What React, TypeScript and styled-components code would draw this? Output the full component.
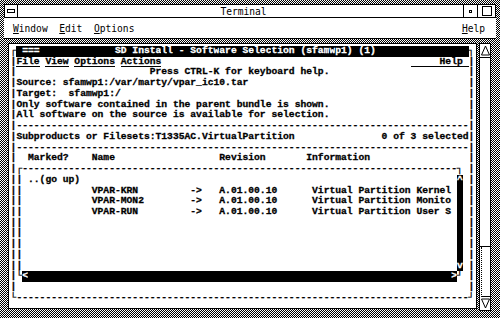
import styled, { createGlobalStyle } from "styled-components";

const GlobalStyle = createGlobalStyle`
  html, body {
    margin: 0;
    padding: 0;
    background: #fff;
  }
  body {
    width: 500px;
    height: 318px;
    overflow: hidden;
  }
`;

const stipple = "repeating-conic-gradient(#000 0% 25%, #fff 0% 50%) 0 0 / 2px 2px";

const COLS = 80;
const CELL_W = 5.8;
const CELL_H = 10.74;

const Screen = styled.div`
  width: 500px;
  height: 318px;
  box-sizing: border-box;
  padding: 4px;
  display: flex;
  flex-direction: column;
  background: ${stipple};
`;

const TitleBar = styled.div`
  display: flex;
  height: 14px;
  box-sizing: border-box;
  border: 1px solid #000;
  background: #fff;
`;

const TitleButton = styled.div<{ $w: number }>`
  flex: none;
  width: ${p => p.$w}px;
  display: flex;
  align-items: center;
  justify-content: center;
  border-right: 1px solid #000;
  box-sizing: border-box;
  &:last-child {
    border-right: none;
  }
`;

const TitleText = styled.div`
  flex: 1;
  display: flex;
  align-items: center;
  justify-content: center;
  padding-left: 6px;
  border-right: 1px solid #000;
  font: 9.6px "DejaVu Sans Mono", monospace;
  color: #000;
`;

const MenuBar = styled.div`
  display: flex;
  align-items: center;
  height: 21px;
  box-sizing: border-box;
  padding: 0 11px 0 9px;
  gap: 11.6px;
  background: #fff;
  border-bottom: 1px solid #000;
  font: 9.6px "DejaVu Sans Mono", monospace;
  color: #000;
  white-space: pre;
`;

const MenuItem = styled.span<{ $right?: boolean }>`
  margin-left: ${p => (p.$right ? "auto" : "0")};
  u {
    text-decoration: underline;
    text-underline-offset: 1px;
  }
`;

const Body = styled.div`
  flex: 1;
  display: flex;
  gap: 2px;
  padding: 4px 5px 0 4px;
`;

const TermFrame = styled.div`
  width: 469px;
  height: 266px;
  box-sizing: border-box;
  border: 1px solid #000;
  background: #fff;
  padding: 2px 0 0 1.6px;
`;

const Row = styled.div`
  display: flex;
  height: ${CELL_H}px;
`;

const Cell = styled.span<{ $inv: boolean; $ul: boolean }>`
  flex: none;
  width: ${CELL_W}px;
  height: ${CELL_H}px;
  font: bold 9.67px/${CELL_H}px "Liberation Mono", "DejaVu Sans Mono", monospace;
  -webkit-text-stroke: 0.3px ${p => (p.$inv ? "#fff" : "#000")};
  white-space: pre;
  overflow: visible;
  color: ${p => (p.$inv ? "#fff" : "#000")};
  background: ${p => (p.$inv ? "#000" : "transparent")};
  box-shadow: ${p => (p.$ul ? "inset 0 -1px 0 #000" : "none")};
`;

const VScroll = styled.div`
  width: 12px;
  height: 268px;
  display: flex;
  flex-direction: column;
  box-sizing: border-box;
  border: 1px solid #000;
  background: #fff;
`;

const Arrow = styled.div`
  flex: none;
  height: 13px;
  display: flex;
  align-items: center;
  justify-content: center;
`;

const Slider = styled.div`
  flex: none;
  height: 190px;
  box-sizing: border-box;
  border-top: 1px solid #000;
  border-bottom: 1px solid #000;
  background: #fff;
`;

const Trough = styled.div`
  flex: 1;
  border-left: 1px dotted #000;
  margin-left: 1px;
  border-bottom: 1px solid #000;
`;

type Seg = { col: number; text: string; inv?: boolean; ul?: boolean };
type CellData = { ch: string; inv: boolean; ul: boolean };

function build(segs: Seg[]): CellData[] {
  const cells: CellData[] = Array.from({ length: COLS }, () => ({ ch: " ", inv: false, ul: false }));
  segs.forEach(s => {
    Array.from(s.text).forEach((ch, i) => {
      const c = cells[s.col + i];
      if (!c) return;
      c.ch = ch;
      if (s.inv) c.inv = true;
      if (s.ul) c.ul = true;
    });
  });
  return cells;
}

const dash = (n: number) => "-".repeat(n);
const sides: Seg[] = [
  { col: 0, text: "|" },
  { col: 79, text: "|" },
];
const box = (...segs: Seg[]): Seg[] => [...sides, { col: 1, text: "|" }, ...segs];

const rows: Seg[][] = [
  [
    { col: 0, text: "┌" },
    { col: 1, text: " ".repeat(78), inv: true },
    { col: 2, text: "===", inv: true },
    { col: 18, text: "SD Install - Software Selection (sfamwp1) (1)", inv: true },
    { col: 79, text: "┐" },
  ],
  [
    ...sides,
    { col: 1, text: "File", ul: true },
    { col: 6, text: "View", ul: true },
    { col: 11, text: "Options", ul: true },
    { col: 19, text: "Actions", ul: true },
    { col: 69, text: "     Help ", ul: true },
  ],
  [...sides, { col: 24, text: "Press CTRL-K for keyboard help." }],
  [...sides, { col: 1, text: "Source: sfamwp1:/var/marty/vpar_ic10.tar" }],
  [...sides, { col: 1, text: "Target:  sfamwp1:/" }],
  [...sides, { col: 1, text: "Only software contained in the parent bundle is shown." }],
  [...sides, { col: 1, text: "All software on the source is available for selection." }],
  [...sides, { col: 1, text: dash(78) }],
  [
    ...sides,
    { col: 1, text: "Subproducts or Filesets:T1335AC.VirtualPartition" },
    { col: 64, text: "0 of 3 selected" },
  ],
  [...sides, { col: 1, text: dash(78) }],
  [
    ...sides,
    { col: 3, text: "Marked?" },
    { col: 14, text: "Name" },
    { col: 36, text: "Revision" },
    { col: 51, text: "Information" },
  ],
  [...sides, { col: 1, text: "┌" + dash(75) + "┐" }],
  box({ col: 3, text: "..(go up)" }, { col: 77, text: "^", inv: true }),
  box(
    { col: 14, text: "VPAR-KRN" },
    { col: 31, text: "->" },
    { col: 36, text: "A.01.00.10" },
    { col: 52, text: "Virtual Partition Kernel" },
    { col: 77, text: " ", inv: true }
  ),
  box(
    { col: 14, text: "VPAR-MON2" },
    { col: 31, text: "->" },
    { col: 36, text: "A.01.00.10" },
    { col: 52, text: "Virtual Partition Monito" },
    { col: 77, text: " ", inv: true }
  ),
  box(
    { col: 14, text: "VPAR-RUN" },
    { col: 31, text: "->" },
    { col: 36, text: "A.01.00.10" },
    { col: 52, text: "Virtual Partition User S" },
    { col: 77, text: " ", inv: true }
  ),
  box({ col: 77, text: " ", inv: true }),
  box({ col: 77, text: " ", inv: true }),
  box({ col: 77, text: " ", inv: true }),
  box({ col: 77, text: " ", inv: true }),
  box({ col: 77, text: "v", inv: true }),
  [
    ...sides,
    { col: 1, text: "└" },
    { col: 2, text: "<" + " ".repeat(73) + ">", inv: true },
    { col: 77, text: "┘" },
  ],
  [...sides],
  [{ col: 0, text: "└" + dash(78) + "┘" }],
];

function Terminal() {
  return (
    <TermFrame>
      {rows.map((segs, r) => (
        <Row key={`row_${r}`}>
          {build(segs).map((c, i) => (
            <Cell key={i} $inv={c.inv} $ul={c.ul}>
              {c.ch}
            </Cell>
          ))}
        </Row>
      ))}
    </TermFrame>
  );
}

function App() {
  return (
    <>
      <GlobalStyle />
      <Screen>
        <TitleBar>
          <TitleButton $w={13}>
            <svg width="8" height="4" viewBox="0 0 8 4">
              <rect x="0.5" y="0.5" width="7" height="3" fill="#fff" stroke="#000" />
            </svg>
          </TitleButton>
          <TitleText>Terminal</TitleText>
          <TitleButton $w={14}>
            <svg width="3" height="3" viewBox="0 0 3 3">
              <rect x="0.5" y="0.5" width="2" height="2" fill="#fff" stroke="#000" />
            </svg>
          </TitleButton>
          <TitleButton $w={17}>
            <svg width="10" height="10" viewBox="0 0 10 10">
              <rect x="0.5" y="0.5" width="9" height="9" fill="#fff" stroke="#000" />
            </svg>
          </TitleButton>
        </TitleBar>
        <MenuBar>
          <MenuItem>
            <u>W</u>indow
          </MenuItem>
          <MenuItem>
            <u>E</u>dit
          </MenuItem>
          <MenuItem>
            <u>O</u>ptions
          </MenuItem>
          <MenuItem $right>
            <u>H</u>elp
          </MenuItem>
        </MenuBar>
        <Body>
          <Terminal />
          <VScroll>
            <Arrow>
              <svg width="9" height="11" viewBox="0 0 9 11">
                <path d="M4.5 1 L8.5 10 L0.5 10 Z" fill="#fff" stroke="#000" strokeWidth="1" />
              </svg>
            </Arrow>
            <Slider />
            <Trough />
            <Arrow>
              <svg width="9" height="11" viewBox="0 0 9 11">
                <path d="M0.5 1 L8.5 1 L4.5 10 Z" fill="#fff" stroke="#000" strokeWidth="1" />
              </svg>
            </Arrow>
          </VScroll>
        </Body>
      </Screen>
    </>
  );
}

export default App;
